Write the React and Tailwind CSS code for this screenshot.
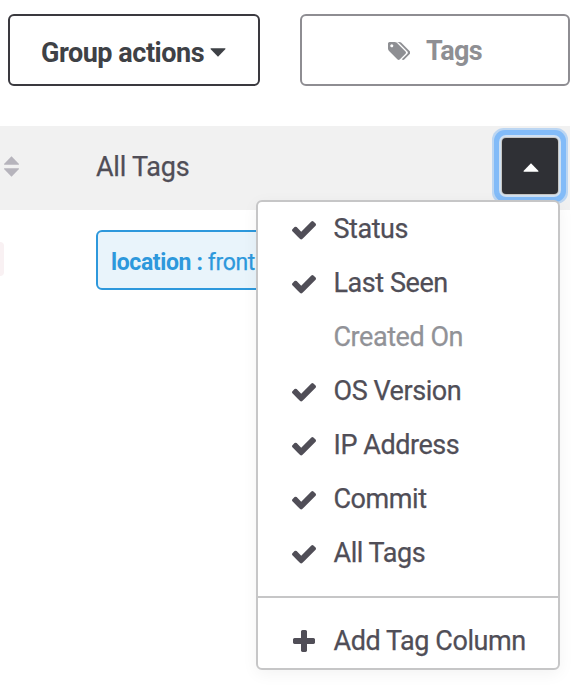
const TagsIcon = () => (
  <svg viewBox="128 128 1899 1515" className="h-[18px] w-[22.5px]" fill="currentColor">
    <path d="M576 448q0-53-37.5-90.5t-90.5-37.5-90.5 37.5-37.5 90.5 37.5 90.5 90.5 37.5 90.5-37.5 37.5-90.5zm1067 576q0 53-37 90l-491 492q-39 37-91 37-53 0-90-37l-715-716q-38-37-64.5-101t-26.5-117v-416q0-52 38-90t90-38h416q53 0 117 26.5t102 64.5l715 714q37 39 37 91zm384 0q0 53-37 90l-491 492q-39 37-91 37-36 0-59-14t-53-45l470-470q37-37 37-90 0-52-37-91l-715-714q-38-38-102-64.5t-117-26.5h224q53 0 117 26.5t102 64.5l715 714q37 39 37 91z" />
  </svg>
);

const CheckIcon = () => (
  <svg viewBox="121 334 1550 1188" className="h-[18.5px] w-6" fill="currentColor">
    <path d="M1671 566q0 40-28 68l-724 724-136 136q-28 28-68 28t-68-28l-136-136-362-362q-28-28-28-68t28-68l136-136q28-28 68-28t68 28l294 295 656-657q28-28 68-28t68 28l136 136q28 28 28 68z" />
  </svg>
);

const PlusIcon = () => (
  <svg viewBox="192 128 1408 1408" className="h-[22px] w-[22px]" fill="currentColor">
    <path d="M1600 736v192q0 40-28 68t-68 28h-416v416q0 40-28 68t-68 28h-192q-40 0-68-28t-28-68v-416h-416q-40 0-68-28t-28-68v-192q0-40 28-68t68-28h416v-416q0-40 28-68t68-28h192q40 0 68 28t28 68v416h416q40 0 68 28t28 68z" />
  </svg>
);

const Triangle = ({ up, className }) => (
  <svg viewBox="0 0 16 9" className={className} fill="currentColor">
    <path d={up ? "M8 0.3 15.5 8Q15.6 8.8 15 8.8H1Q.4 8.8.5 8Z" : "M8 8.7 15.5 1Q15.6.2 15 .2H1Q.4.2.5 1Z"} />
  </svg>
);

const columns = [
  { label: "Status", on: true },
  { label: "Last Seen", on: true },
  { label: "Created On", on: false },
  { label: "OS Version", on: true },
  { label: "IP Address", on: true },
  { label: "Commit", on: true },
  { label: "All Tags", on: true },
];

export default function App() {
  return (
    <div className="relative h-[692px] w-[586px] overflow-hidden bg-white pt-[14px] font-['Roboto',sans-serif] text-[27px] leading-[54px] tracking-[-0.45px] text-[#504e57]">
      <div className="flex gap-10 pl-2">
        <button className="flex h-[72px] w-[252px] items-center rounded-md border-2 border-[#3a393f] pt-[5px] pl-[31px] font-bold tracking-[-0.47px] text-[#3e4146]">
          <span className="whitespace-nowrap">Group actions</span>
          <Triangle className="ml-[6px] h-[9px] w-4" />
        </button>
        <button className="flex h-[72px] w-[270px] items-center rounded-md border-2 border-[#8e8d92] pt-px pl-[85.5px] font-bold tracking-[-0.6px] text-[#8e8f93]">
          <TagsIcon />
          <span className="ml-4">Tags</span>
        </button>
      </div>

      <div className="mt-10 flex h-[84px] w-[570px] items-center bg-[#f1f1f1] pr-3 pb-1 pl-[3px]">
        <div className="flex w-[93px] flex-col gap-[3px] text-[#b6b4bc]">
          <Triangle up className="h-[9px] w-[17px]" />
          <Triangle className="h-[9px] w-[17px]" />
        </div>
        <span className="pt-[2px] tracking-[-0.25px] [-webkit-text-stroke:0.25px_currentColor]">All Tags</span>
        <button className="ml-auto flex h-14 w-14 items-center justify-center rounded-[4px] bg-[#2f3035] text-white shadow-[0_0_0_1px_#c6c5c2,0_0_0_3px_#cfe0f2,0_0_0_8px_#82bbf8,0_0_0_10px_#bcd6f2]">
          <Triangle up className="mt-[3px] ml-px h-[9px] w-4" />
        </button>
      </div>

      <div className="mt-5 flex items-start gap-[92px]">
        <div className="mt-3 h-[34px] w-1 rounded-r-[4px] bg-[#f9f1f3]" />
        <div className="flex h-[60px] w-[240px] items-center rounded-md border-2 border-[#2d98dc] bg-[#e9f4fb] pt-[5px] pl-[13px] text-[23px] tracking-[-0.38px] whitespace-pre text-[#2d98dc]">
          <b>location : </b>
          <span className="[-webkit-text-stroke:0.25px_currentColor]">front</span>
        </div>
      </div>

      <div className="absolute top-[200px] left-[256px] h-[470px] w-[304px] rounded-md border-2 border-[#c6c6c7] bg-white shadow-[0_4px_16px_rgba(0,0,0,0.05)] [-webkit-text-stroke:0.25px_currentColor]">
        <ul className="h-[394px]">
          {columns.map(({ label, on }) => (
            <li key={label} className="flex h-[54px] items-center pl-[34px]">
              <span className="w-[41.5px] pt-[3px]">{on && <CheckIcon />}</span>
              <span className={on ? "" : "text-[#919297]"}>{label}</span>
            </li>
          ))}
        </ul>
        <div className="flex h-[72px] items-center border-t-2 border-[#c6c6c7] pt-[15px] pl-[35px]">
          <span className="w-[40.5px]"><PlusIcon /></span>
          <span className="pt-px whitespace-nowrap tracking-[-0.45px]">Add Tag Column</span>
        </div>
      </div>
    </div>
  );
}
